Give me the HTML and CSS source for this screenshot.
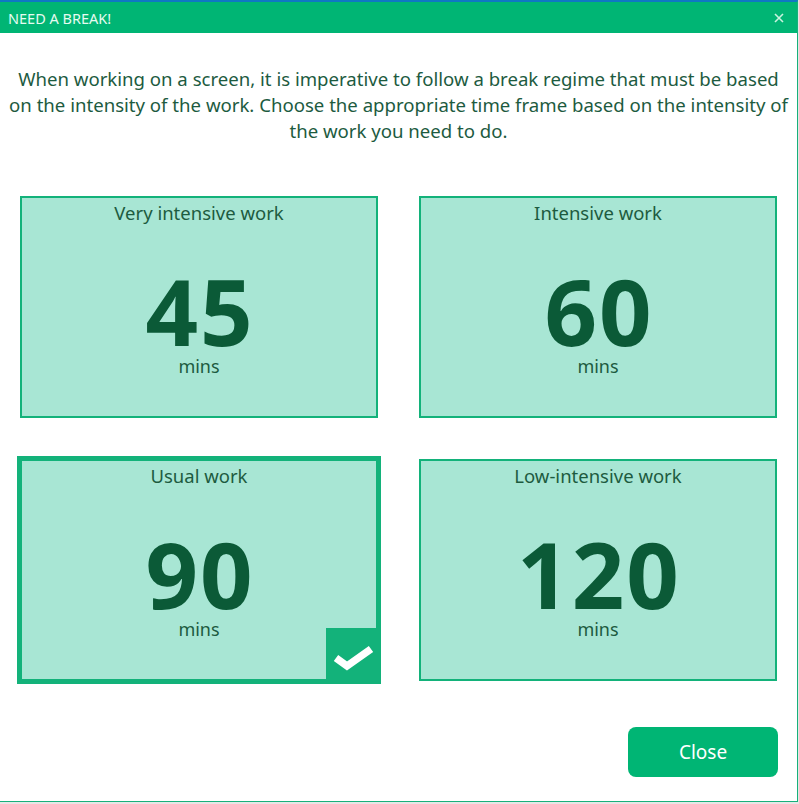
FILE: index.html
```html
<!DOCTYPE html>
<html>
<head>
<meta charset="utf-8">
<link rel="stylesheet" href="styles.css">
</head>
<body>
<div class="window">
  <div class="titlebar">
    <span class="title">NEED A BREAK!</span>
    <svg class="x" width="10" height="10" viewBox="0 0 10 10"><path d="M1 1L9 9M9 1L1 9" stroke="#c9f3df" stroke-width="1.6"/></svg>
  </div>
  <div class="content">
    <p class="intro">When working on a screen, it is imperative to follow a break regime that must be based<br>on the intensity of the work. Choose the appropriate time frame based on the intensity of<br>the work you need to do.</p>
    <div class="grid">
      <div class="card">
        <div class="card-title">Very intensive work</div>
        <div class="num">45</div>
        <div class="unit">mins</div>
      </div>
      <div class="card">
        <div class="card-title">Intensive work</div>
        <div class="num">60</div>
        <div class="unit">mins</div>
      </div>
      <div class="card selected">
        <div class="card-title">Usual work</div>
        <div class="num">90</div>
        <div class="unit">mins</div>
        <div class="badge">
          <svg width="55" height="56" viewBox="0 0 55 56"><polyline points="10,30 21,38 45,21" fill="none" stroke="#fff" stroke-width="7.5" stroke-linejoin="miter"/></svg>
        </div>
      </div>
      <div class="card">
        <div class="card-title">Low-intensive work</div>
        <div class="num">120</div>
        <div class="unit">mins</div>
      </div>
    </div>
    <div class="actions">
      <button class="btn">Close</button>
    </div>
  </div>
</div>
</body>
</html>
```
FILE: styles.css
```css
html, body {
  margin: 0;
  padding: 0;
  background: #e6e6e6;
}
body {
  font-family: "Noto Sans", "Open Sans", sans-serif;
  width: 799px;
  height: 804px;
}
.window {
  background: #fff;
  border-top: 2px solid #0f78c4;
  border-right: 1px solid #17b07a;
  border-bottom: 1px solid #17b07a;
  box-sizing: border-box;
  height: 802px;
  width: 798px;
  display: flex;
  flex-direction: column;
}
.titlebar {
  height: 31px;
  background: #00b574;
  display: flex;
  align-items: center;
  justify-content: space-between;
  padding: 0 13px 0 8px;
  flex-shrink: 0;
}
.title {
  color: #e6fbf1;
  font-size: 14.5px;
}
.x {
  display: block;
}
.content {
  flex: 1;
  display: flex;
  flex-direction: column;
}
.intro {
  margin: 33px 0 0 0;
  padding: 0 2px 0 2px;
  text-align: center;
  white-space: nowrap;
  color: #1d5b3f;
  font-size: 18.6px;
  line-height: 26px;
}
.grid {
  margin: 52px 0 0 20px;
  display: grid;
  grid-template-columns: 358px 358px;
  grid-template-rows: 222px 222px;
  column-gap: 41px;
  row-gap: 41px;
}
.card {
  position: relative;
  background: #a8e6d4;
  border: 2px solid #13b27a;
  box-sizing: border-box;
  display: flex;
  flex-direction: column;
  align-items: center;
  color: #1d5b3f;
}
.card.selected {
  box-shadow: 0 0 0 3px #13b27a;
}
.card-title {
  margin-top: 3px;
  font-size: 18.5px;
  line-height: 24px;
}
.num {
  margin-top: 46px;
  font-size: 92px;
  line-height: 80px;
  font-weight: 700;
  color: #0b5a37;
  letter-spacing: 2px;
  padding-left: 2px;
}
.unit {
  margin-top: 5px;
  font-size: 18px;
  line-height: 20px;
}
.badge {
  position: absolute;
  right: -5px;
  bottom: -5px;
  width: 55px;
  height: 56px;
  background: #13b27a;
}
.badge svg {
  display: block;
}
.actions {
  display: flex;
  justify-content: flex-end;
  margin-top: 46px;
  padding-right: 19px;
}
.btn {
  width: 150px;
  height: 50px;
  border: none;
  border-radius: 8px;
  background: #00b574;
  color: #fff;
  font-family: "Noto Sans", "Open Sans", sans-serif;
  font-size: 19px;
  padding: 0;
}
```
